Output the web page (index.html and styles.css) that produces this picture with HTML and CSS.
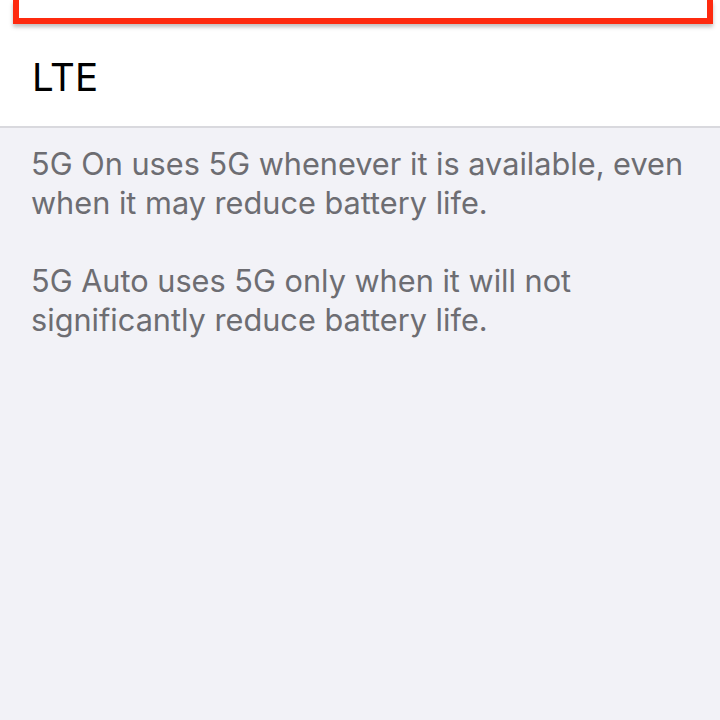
FILE: index.html
```html
<!DOCTYPE html>
<html lang="en">
<head>
    <meta charset="UTF-8">
    <meta name="viewport" content="width=device-width, initial-scale=1.0">
    <title>Voice &amp; Data</title>
    <link rel="stylesheet" href="styles.css">
</head>
<body>
    <div class="settings-group">
        <!-- highlighted row, cut off at the top of the screenshot -->
        <div class="highlight-box"></div>
        <div class="settings-row">
            <span class="row-label">LTE</span>
        </div>
    </div>

    <div class="group-footer">
        <p>5G On uses 5G whenever it is available, even when it may reduce battery life.</p>
        <p>5G Auto uses 5G only when it will not significantly reduce battery life.</p>
    </div>
</body>
</html>
```

FILE: styles.css
```css
body {
    margin: 0;
    padding: 0;
    background-color: #f2f2f7;
    font-family: Inter, "Noto Sans", sans-serif;
    width: 720px;
    height: 720px;
    overflow: hidden;
}

.settings-group {
    background-color: #ffffff;
    border-bottom: 2px solid #d9d9de;
}

.highlight-box {
    height: 18px;
    margin: 0 7px 0 13px;
    border: 6px solid #fe2a0f;
    border-top: none;
    background-color: #ffffff;
    box-shadow: 0px 3px 4px rgba(0, 0, 0, 0.25);
}

.settings-row {
    height: 102px;
    display: flex;
    align-items: center;
    padding-left: 32px;
}

.row-label {
    font-size: 38.5px;
    color: #000000;
    padding-top: 3px;
}

.group-footer {
    padding: 16px 32px 0 31px;
    color: #6d6d72;
    font-size: 30.7px;
    line-height: 39px;
}

.group-footer p {
    margin: 0 0 39px 0;
}
```
